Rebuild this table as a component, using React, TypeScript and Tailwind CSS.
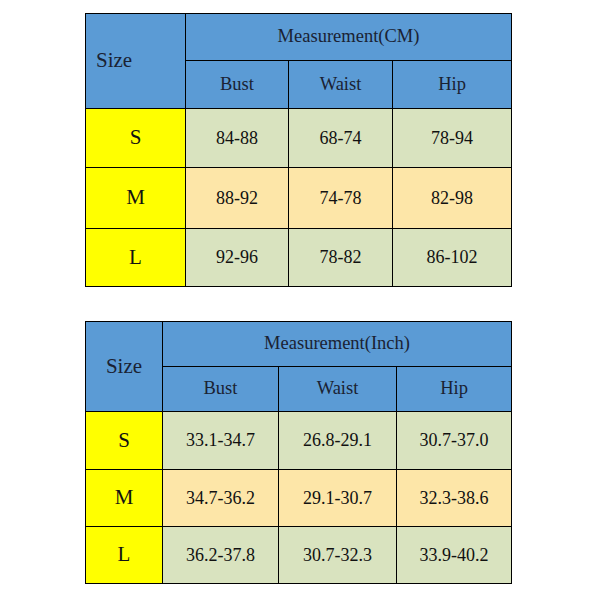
const cm = {
  title: 'Measurement(CM)',
  width: 'w-[426px]',
  cols: ['w-[100px]', 'w-[103px]', 'w-[104px]', 'w-[119px]'],
  rows: ['h-[47px]', 'h-[48px]', 'h-[59px]', 'h-[61px]', 'h-[58px]'],
  sizeAlign: 'text-left pl-[10px]',
  data: [
    ['S', '84-88', '68-74', '78-94'],
    ['M', '88-92', '74-78', '82-98'],
    ['L', '92-96', '78-82', '86-102'],
  ],
}

const inch = {
  title: 'Measurement(Inch)',
  width: 'w-[426px]',
  cols: ['w-[77px]', 'w-[116px]', 'w-[118px]', 'w-[115px]'],
  rows: ['h-[45px]', 'h-[45px]', 'h-[58px]', 'h-[57px]', 'h-[57px]'],
  sizeAlign: 'text-center',
  data: [
    ['S', '33.1-34.7', '26.8-29.1', '30.7-37.0'],
    ['M', '34.7-36.2', '29.1-30.7', '32.3-38.6'],
    ['L', '36.2-37.8', '30.7-32.3', '33.9-40.2'],
  ],
}

type Spec = typeof cm

function SizeTable({ spec }: { spec: Spec }) {
  const cell = "border border-black text-center p-0 font-['Liberation_Serif',serif]"
  const head = 'bg-[#5b9bd5] text-[#1a2233]'
  return (
    <table className={`table-fixed border-collapse text-[#111] ${spec.width}`}>
      <colgroup>
        {spec.cols.map((w, i) => (
          <col key={i} className={w} />
        ))}
      </colgroup>
      <tbody>
        <tr className={spec.rows[0]}>
          <td rowSpan={2} className={`${cell} ${head} ${spec.sizeAlign} text-[21px]`}>
            Size
          </td>
          <td colSpan={3} className={`${cell} ${head} text-[18.5px]`}>
            {spec.title}
          </td>
        </tr>
        <tr className={spec.rows[1]}>
          {['Bust', 'Waist', 'Hip'].map((h) => (
            <td key={h} className={`${cell} ${head} text-[18.5px]`}>
              {h}
            </td>
          ))}
        </tr>
        {spec.data.map((r, i) => (
          <tr key={r[0]} className={spec.rows[i + 2]}>
            <td className={`${cell} bg-[#ffff00] text-[21px]`}>{r[0]}</td>
            {r.slice(1).map((v, j) => (
              <td
                key={j}
                className={`${cell} text-[18px] ${i === 1 ? 'bg-[#fde6a8]' : 'bg-[#d9e3bf]'}`}
              >
                {v}
              </td>
            ))}
          </tr>
        ))}
      </tbody>
    </table>
  )
}

export default function App() {
  return (
    <div className="w-[600px] h-[600px] bg-white flex flex-col pl-[85px] pt-[13px] gap-[34px]">
      <SizeTable spec={cm} />
      <SizeTable spec={inch} />
    </div>
  )
}
